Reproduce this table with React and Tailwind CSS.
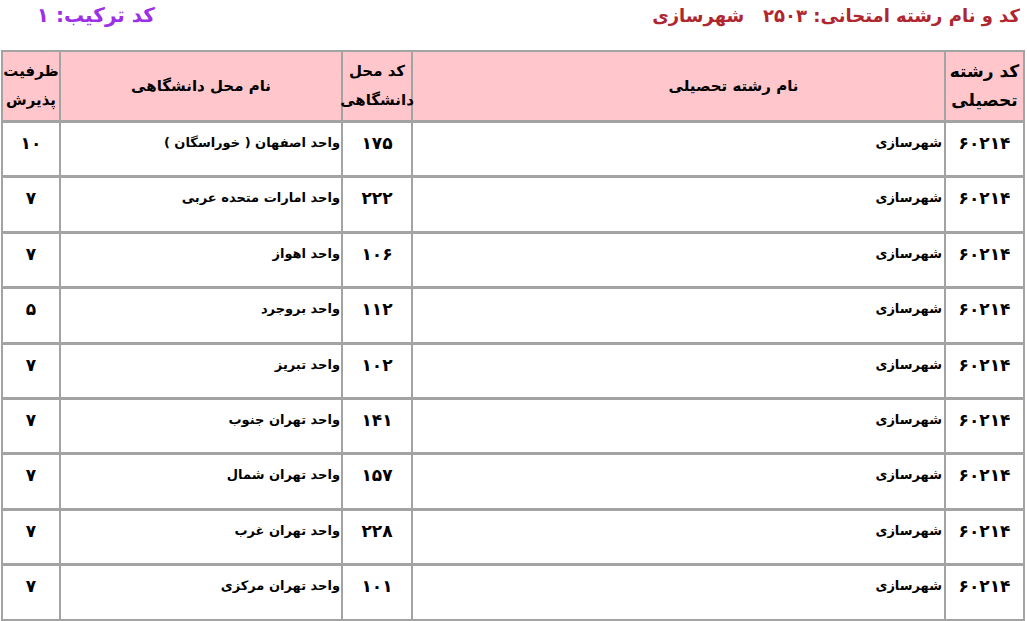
const rows = [
  { code: '۱۷۵', name: 'واحد اصفهان ( خوراسگان )', cap: '۱۰' },
  { code: '۲۲۲', name: 'واحد امارات متحده عربی', cap: '۷' },
  { code: '۱۰۶', name: 'واحد اهواز', cap: '۷' },
  { code: '۱۱۲', name: 'واحد بروجرد', cap: '۵' },
  { code: '۱۰۲', name: 'واحد تبریز', cap: '۷' },
  { code: '۱۴۱', name: 'واحد تهران جنوب', cap: '۷' },
  { code: '۱۵۷', name: 'واحد تهران شمال', cap: '۷' },
  { code: '۲۲۸', name: 'واحد تهران غرب', cap: '۷' },
  { code: '۱۰۱', name: 'واحد تهران مرکزی', cap: '۷' },
];

const font = "font-['Tahoma','DejaVu_Sans',sans-serif]";

function HeadCell({ className, children }) {
  return (
    <div className={`flex items-center justify-center text-center leading-[29px] font-bold whitespace-nowrap text-black ${className}`}>
      <div>{children}</div>
    </div>
  );
}

function Row({ code, name, cap }) {
  return (
    <div className="flex h-[55.4px] shrink-0 border-b-[3px] border-[#a3a3a3] bg-white">
      <div className="w-[79px] shrink-0 border-l-2 border-[#a3a3a3] pt-[9px] text-center text-[17px] leading-[22px] font-bold">
        ۶۰۲۱۴
      </div>
      <div className="w-[533px] shrink-0 border-l-2 border-[#a3a3a3] pt-[9px] pr-[2px] text-right text-[13px] leading-[22px] font-bold">
        شهرسازی
      </div>
      <div className="w-[70px] shrink-0 border-l-2 border-[#a3a3a3] pt-[9px] text-center text-[17px] leading-[22px] font-bold">
        {code}
      </div>
      <div className="w-[282px] shrink-0 border-l-2 border-[#a3a3a3] pt-[9px] pr-[1px] text-right text-[13px] leading-[22px] font-bold">
        {name}
      </div>
      <div className="w-[56px] shrink-0 pt-[9px] text-center text-[17px] leading-[22px] font-bold">
        {cap}
      </div>
    </div>
  );
}

export default function App() {
  return (
    <div dir="rtl" className={`w-[1027px] h-[621px] overflow-hidden bg-white text-black ${font}`}>
      <div className="flex h-[30px] items-center justify-between pr-[7px]">
        <div className="text-[18px] font-bold text-[#b0262f]">
          کد و نام رشته امتحانی: ۲۵۰۳&nbsp;&nbsp; شهرسازی
        </div>
        <div className="w-[155px] text-right text-[20px] font-bold text-[#9b30e6]">
          کد ترکیب: ۱
        </div>
      </div>
      <div className="mt-[20px] mr-[2px] w-[1024px] border-2 border-b-0 border-[#a3a3a3]">
        <div className="flex h-[71px] border-b-[3px] border-[#a3a3a3] bg-[#ffc6cb]">
          <HeadCell className="w-[79px] shrink-0 border-l-2 border-[#a3a3a3] text-[17px]">
            کد رشته<br />تحصیلی
          </HeadCell>
          <HeadCell className="w-[533px] shrink-0 border-l-2 border-[#a3a3a3] pl-[110px] text-[15px]">
            نام رشته تحصیلی
          </HeadCell>
          <HeadCell className="w-[70px] shrink-0 border-l-2 border-[#a3a3a3] text-[15px]">
            کد محل<br />دانشگاهی
          </HeadCell>
          <HeadCell className="w-[282px] shrink-0 border-l-2 border-[#a3a3a3] text-[15px]">
            نام محل دانشگاهی
          </HeadCell>
          <HeadCell className="w-[56px] shrink-0 text-[15px]">
            ظرفیت<br />پذیرش
          </HeadCell>
        </div>
        {rows.map((r) => (
          <Row key={r.code} {...r} />
        ))}
      </div>
    </div>
  );
}
